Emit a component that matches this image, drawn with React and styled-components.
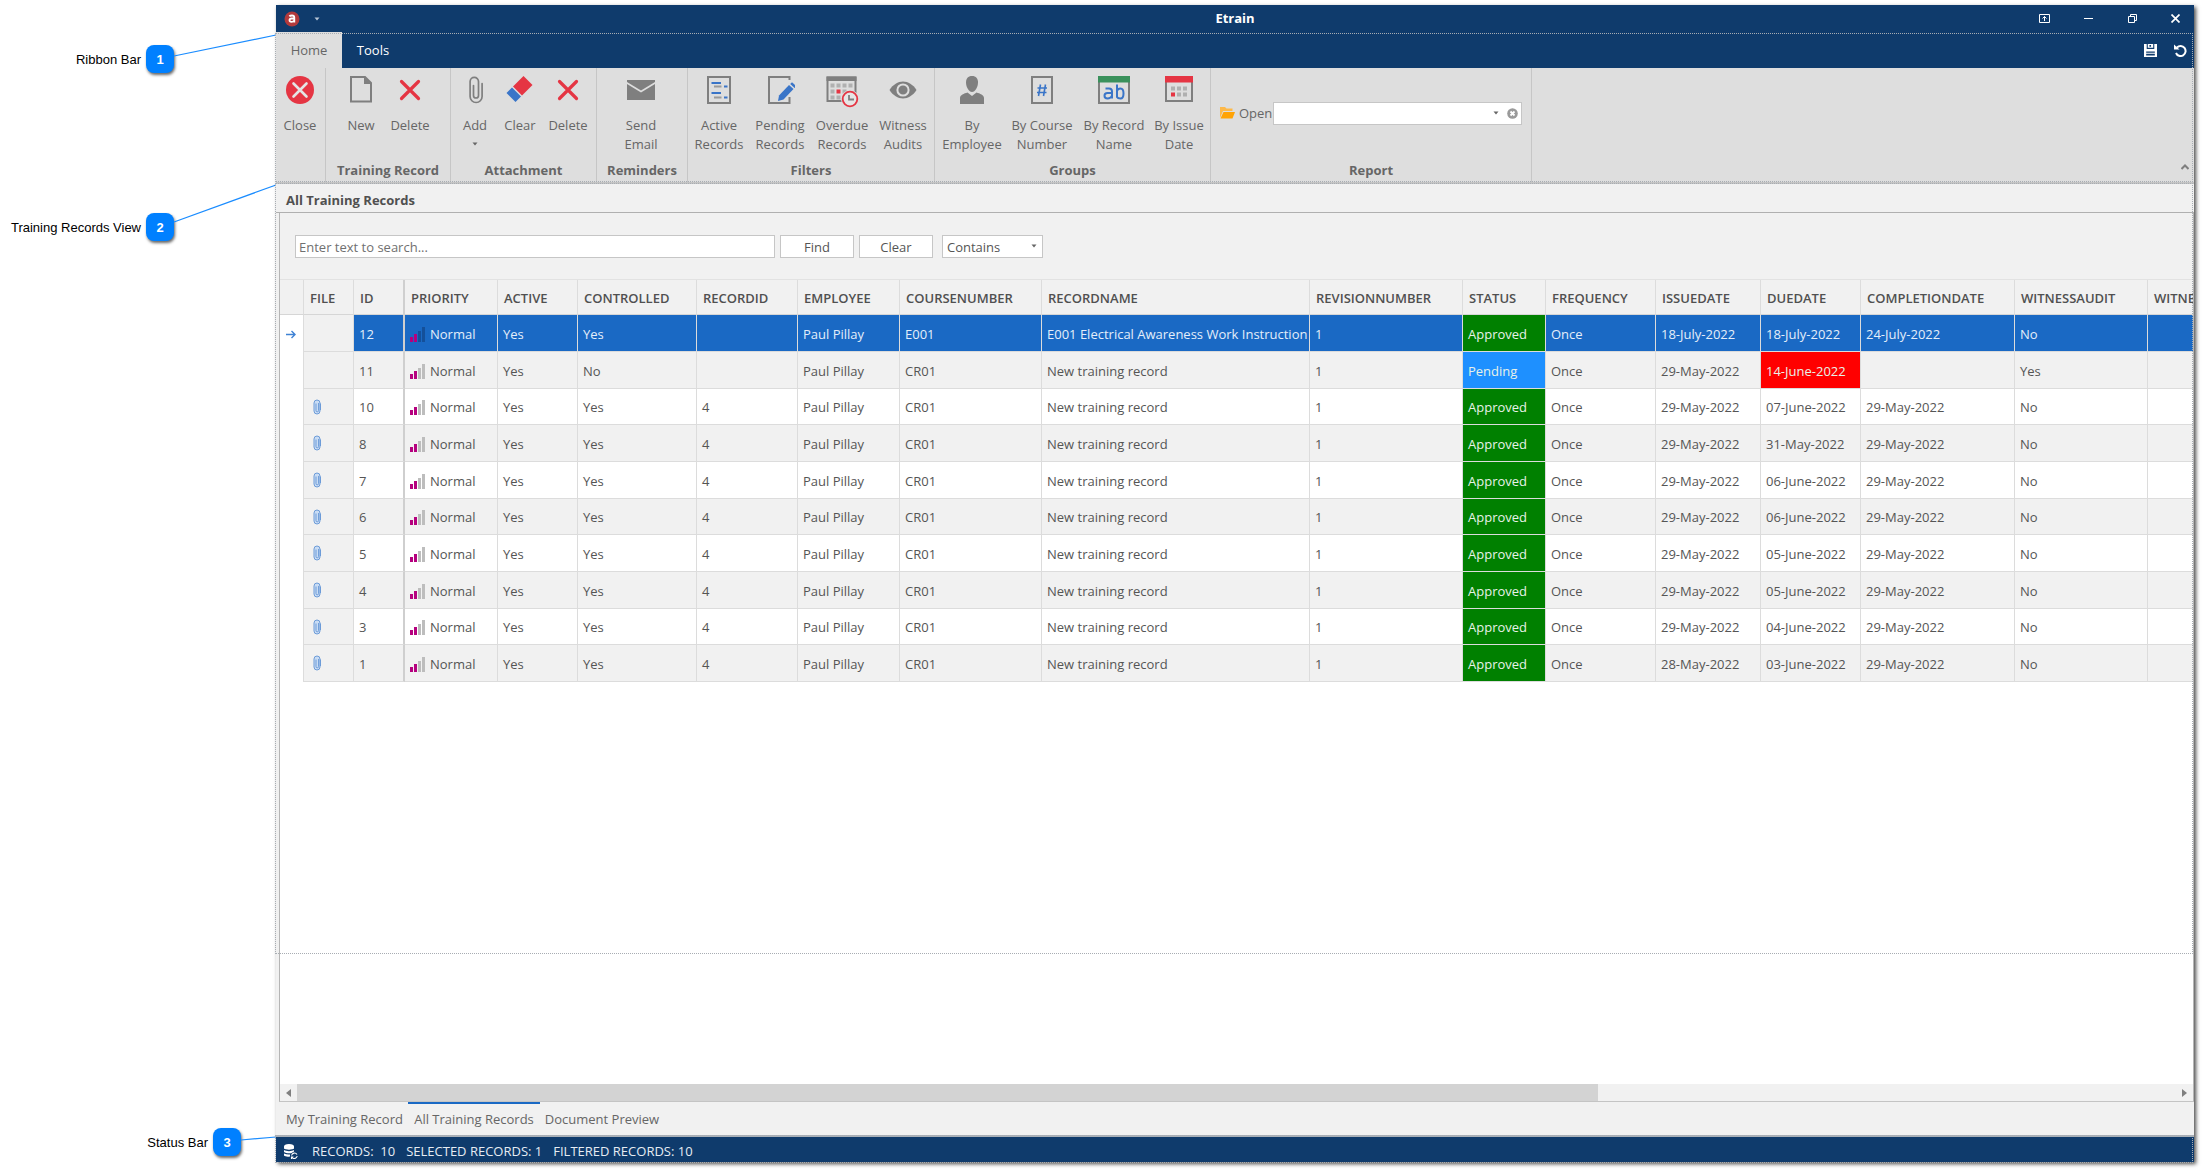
import React from "react";
import styled, { createGlobalStyle } from "styled-components";

const GlobalStyle = createGlobalStyle`
  * {
    box-sizing: border-box;
  }
  body {
    margin: 0;
    background: #fff;
    color: #555;
    font-family: "Open Sans", "Noto Sans", sans-serif;
    font-size: 13px;
    line-height: 19px;
  }
  button, input, select {
    font: inherit;
    color: inherit;
    margin: 0;
    padding: 0;
    border: 0;
    background: none;
    border-radius: 0;
  }
  svg {
    display: block;
    flex: none;
  }
`;

const Page = styled.div`
  position: relative;
  display: flex;
  min-height: 100vh;
`;
const Gutter = styled.aside`
  flex: none;
  width: 276px;
`;
const Callout = styled.div`
  position: absolute;
  left: 0;
  width: ${(p) => p.$width}px;
  ${(p) => (p.$bottom ? `bottom: ${p.$bottom}px;` : `top: ${p.$top}px;`)}
  display: flex;
  align-items: center;
  justify-content: flex-end;
  gap: 5px;
  color: #000;
  font-family: "Liberation Sans", Arial, sans-serif;
`;
const Badge = styled.span`
  display: flex;
  align-items: center;
  justify-content: center;
  width: 28px;
  height: 28px;
  border-radius: 8px;
  background: #0080ff;
  box-shadow: 1px 2px 3px rgba(0, 0, 0, 0.6);
  color: #fff;
  font-weight: bold;
`;
const Leader = styled.svg`
  position: absolute;
  left: 100%;
  top: 0;
  overflow: visible;
`;

const Window = styled.main`
  position: relative;
  display: flex;
  flex-direction: column;
  flex: 1;
  min-width: 0;
  margin: 5px 15px 12px 0;
  background: #f1f1f1;
  box-shadow: 2px 2px 4px rgba(0, 0, 0, 0.7);
`;
const Outline = styled.div`
  position: absolute;
  left: -1px;
  right: 1px;
  top: ${(p) => p.$top};
  bottom: ${(p) => p.$bottom};
  height: ${(p) => p.$height};
  border: 1px dotted #a8adb3;
  pointer-events: none;
`;

const TitleBar = styled.header`
  display: grid;
  grid-template-columns: 1fr auto 1fr;
  align-items: center;
  height: 27px;
  background: #0f3b6c;
  color: #fff;
`;
const AppTitle = styled.h1`
  margin: 0;
  font-size: 13px;
  font-weight: 700;
`;
const TitleLeft = styled.div`
  display: flex;
  align-items: center;
  gap: 14px;
  padding-left: 8px;
`;
const WindowButtons = styled.div`
  display: flex;
  justify-content: flex-end;
  padding-right: 6px;
`;
const WindowButton = styled.button`
  display: flex;
  align-items: center;
  justify-content: center;
  width: 44px;
  height: 26px;
  &:last-child {
    width: 26px;
    margin-left: 8px;
  }
`;
const TabRow = styled.nav`
  display: flex;
  height: 36px;
  background: #0f3b6c;
`;
const RibbonTab = styled.button`
  width: ${(p) => p.$width}px;
  padding-top: 1px;
  background: ${(p) => (p.$active ? "#dedede" : "none")};
  color: ${(p) => (p.$active ? "#666" : "#fff")};
`;
const QuickButtons = styled.div`
  display: flex;
  align-items: center;
  gap: 16px;
  margin-left: auto;
  padding-right: 6px;
`;
const QuickButton = styled.button`
  width: 14px;
`;

const Ribbon = styled.section`
  display: flex;
  height: 116px;
  background: #dedede;
  color: #666;
  border-bottom: 2px solid #c4c4c4;
`;
const Group = styled.div`
  display: flex;
  flex-direction: column;
  flex: none;
  width: ${(p) => p.$width}px;
  border-right: 1px solid #c6c6c6;
`;
const GroupItems = styled.div`
  display: flex;
  flex: 1;
  padding-left: ${(p) => p.$indent || 0}px;
`;
const GroupTitle = styled.h2`
  margin: 0;
  height: 21px;
  font-size: 13px;
  font-weight: 700;
  line-height: 19px;
  text-align: center;
`;
const ToolButton = styled.button`
  display: flex;
  flex-direction: column;
  align-items: center;
  flex: none;
  width: ${(p) => p.$width}px;
  padding-top: 7px;
`;
const ToolLabel = styled.span`
  display: block;
  margin-top: 11px;
  white-space: pre;
  text-align: center;
`;
const ReportRow = styled.div`
  display: flex;
  align-items: center;
  height: 90px;
  gap: 1px;
  margin-bottom: 3px;
  padding: 0 9px;
`;
const ReportLabel = styled.label`
  display: flex;
  align-items: center;
  gap: 4px;
`;
const ComboBox = styled.div`
  display: flex;
  align-items: center;
  gap: 8px;
  flex: 1;
  height: 23px;
  padding-right: 3px;
  border: 1px solid #c6c6c6;
  background: #fff;
`;
const ComboInput = styled.input`
  flex: 1;
  min-width: 0;
  outline: none;
`;
const CollapseButton = styled.button`
  align-self: flex-end;
  margin-left: auto;
  padding: 0 5px 12px;
`;

const ViewTitle = styled.h2`
  margin: 0;
  height: 29px;
  padding: 7px 10px 0;
  border-bottom: 1px solid #b0b0b0;
  color: #505050;
  font-size: 13px;
  font-weight: 700;
  line-height: 19px;
`;
const View = styled.section`
  display: flex;
  flex-direction: column;
  flex: 1;
  min-height: 0;
  margin-left: 3px;
  border-left: 1px solid #b5b5b5;
  border-right: 1px solid #b5b5b5;
  border-bottom: 1px solid #c4c4c4;
  background: #fff;
`;
const SearchRow = styled.form`
  display: flex;
  align-items: flex-start;
  height: 67px;
  padding: 22px 15px 0;
  background: #f1f1f1;
  border-bottom: 1px solid #e2e2e2;
`;
const SearchInput = styled.input`
  width: 480px;
  height: 23px;
  padding: 1px 3px 0;
  border: 1px solid #c6c6c6;
  background: #fff;
  &::placeholder {
    color: #707070;
    opacity: 1;
  }
`;
const SearchButton = styled.button`
  width: 74px;
  height: 23px;
  margin-left: 5px;
  padding-top: 1px;
  border: 1px solid #c6c6c6;
  background: #fff;
`;
const SelectBox = styled.div`
  position: relative;
  margin-left: 9px;
`;
const Select = styled.select`
  appearance: none;
  width: 101px;
  height: 23px;
  padding: 1px 4px 0;
  border: 1px solid #c6c6c6;
  background: #fff;
`;
const SelectArrow = styled.span`
  position: absolute;
  right: 6px;
  top: 9px;
  pointer-events: none;
`;

const GridScroll = styled.div`
  flex: 1;
  min-height: 0;
  overflow: hidden;
`;
const Table = styled.table`
  table-layout: fixed;
  width: 2018px;
  border-collapse: separate;
  border-spacing: 0;
`;
const HeadCell = styled.th`
  height: 35px;
  padding: 2px 6px 0;
  border-right: ${(p) => (p.$pinned ? "2px solid #cfcfcf" : "1px solid #dcdcdc")};
  border-bottom: 1px solid #d6d6d6;
  background: #f1f1f1;
  color: #505050;
  font-weight: 600;
  font-size: 13px;
  text-align: left;
  white-space: nowrap;
`;
const Row = styled.tr`
  height: 37px;
  background: ${(p) => (p.$selected ? "#1a69c4" : "#fff")};
  color: ${(p) => (p.$selected ? "#e4eefa" : "#555")};
  &:nth-child(even) {
    background: #f1f1f1;
  }
  &:nth-child(3n) {
    height: 36px;
  }
`;
const Cell = styled.td`
  padding: 2px 5px 0;
  border-right: ${(p) => (p.$pinned ? "2px solid #cfcfcf" : "1px solid #dcdcdc")};
  border-bottom: 1px solid #dcdcdc;
  background: ${(p) => p.$fill || "transparent"};
  color: ${(p) => (p.$fill ? "#e8f2e8" : "inherit")};
  white-space: nowrap;
`;
const IndicatorCell = styled.td`
  padding: 2px 0 0 6px;
  border-right: 1px solid #dcdcdc;
  background: #fff;
`;
const FileCell = styled(Cell)`
  padding: 0 9px;
  background: #f1f1f1;
`;
const Priority = styled.span`
  display: flex;
  align-items: center;
  gap: 5px;
`;

const ScrollBar = styled.div`
  display: flex;
  height: 17px;
  background: #f1f1f1;
`;
const ScrollButton = styled.button`
  display: flex;
  align-items: center;
  justify-content: center;
  width: 17px;
`;
const ScrollTrack = styled.div`
  display: grid;
  grid-template-columns: 9fr 4fr;
  flex: 1;
`;
const ScrollThumb = styled.div`
  background: #d3d3d3;
`;

const ViewTabs = styled.nav`
  display: flex;
  height: 33px;
  padding-left: 5px;
`;
const ViewTab = styled.button`
  width: ${(p) => p.$width}px;
  border-top: 2px solid ${(p) => (p.$active ? "#1a69c4" : "transparent")};
  color: #666;
  white-space: nowrap;
`;
const StatusBar = styled.footer`
  display: flex;
  align-items: center;
  gap: 11px;
  height: 27px;
  padding: 3px 8px 0;
  border-top: 2px solid #a9b0b8;
  background: #0f3b6c;
  color: #e6ecf3;
  white-space: pre;
`;
const StatusIcon = styled.span`
  margin-right: 3px;
`;

const GRAY = "#7f7f7f";
const RED = "#e53543";
const BLUE = "#3a75c8";

const Icon = ({ size = 30, children }) => (
  <svg width={size} height={size} viewBox="0 0 30 30" fill="none">
    {children}
  </svg>
);

const CloseIcon = () => (
  <Icon>
    <circle cx="15" cy="15" r="14" fill={RED} />
    <path d="M8.500 8.500 21.500 21.500M21.500 8.500 8.500 21.500" stroke="#e4e4e4" strokeWidth="2.600" strokeLinecap="round" />
  </Icon>
);
const NewIcon = () => (
  <Icon>
    <path d="M5 2H19L25 8V26.500H5Z" stroke={GRAY} strokeWidth="2" />
    <path d="M18 2V9H26Z" fill={GRAY} />
  </Icon>
);
const DeleteIcon = () => (
  <Icon>
    <path d="M6.500 6.500 23.500 23.500M23.500 6.500 6.500 23.500" stroke={RED} strokeWidth="3.200" strokeLinecap="round" />
  </Icon>
);
const ClipIcon = () => (
  <Icon>
    <path
      d="M18.500 8V20.500a2.500 2.500 0 0 1-5 0V10.500M18.500 8.500V6.500a4.200 4.200 0 0 0-8.400 0V21.500a6 6 0 0 0 12 0V8.500"
      stroke={GRAY}
      strokeWidth="1.700"
      strokeLinecap="round"
    />
  </Icon>
);
const EraserIcon = () => (
  <Icon>
    <path d="M18.500 1 27.500 10 17 20.500 8 11.500Z" fill={RED} />
    <path d="M7 12.500 16 21.500 10.500 27 1.500 18Z" fill={BLUE} />
  </Icon>
);
const MailIcon = () => (
  <Icon>
    <path d="M1 5H29V7L15 15.500 1 7Z" fill={GRAY} />
    <path d="M1 9 15 17.500 29 9V25H1Z" fill={GRAY} />
  </Icon>
);
const ActiveIcon = () => (
  <Icon>
    <rect x="4" y="2" width="22" height="26" stroke={GRAY} strokeWidth="2" />
    <path d="M7.500 8H17M20 11.500H23.500M7.500 18H17M20 22.500H23.500" stroke={BLUE} strokeWidth="1.800" />
    <path d="M10 11.500H17.500M10 22.500H17.500" stroke="#9a9a9a" strokeWidth="1.800" />
  </Icon>
);
const PendingIcon = () => (
  <Icon>
    <path d="M24.500 5V2H4V28H24.500V22" stroke={GRAY} strokeWidth="2" />
    <path d="M14 20.500 24 10 28.500 14 18.500 24.500 13 26Z" fill={BLUE} />
    <path d="M25.200 9 27 7.300 31.500 11.500 29.600 13Z" fill={BLUE} />
  </Icon>
);
const OverdueIcon = () => (
  <svg width="34" height="34" viewBox="0 0 34 34" fill="none">
    <path d="M2.500 2.500H30.500V26H2.500Z" stroke={GRAY} strokeWidth="2" />
    <path d="M1.500 1.500H31.500V6H1.500Z" fill={GRAY} />
    <path
      d="M5.500 8.500h4v4h-4ZM11.500 8.500h4v4h-4ZM17.500 8.500h4v4h-4ZM23.500 8.500h4v4h-4ZM5.500 14.500h4v4h-4ZM17.500 14.500h4v4h-4ZM5.500 20.500h4v4h-4ZM11.500 20.500h4v4h-4Z"
      fill="#b0b0b0"
    />
    <path d="M11.500 14.500h4v4h-4Z" fill={RED} />
    <circle cx="25" cy="24" r="9" fill="#dedede" />
    <circle cx="25" cy="24" r="7.300" stroke={RED} strokeWidth="1.800" fill="#e6e6e6" />
    <path d="M24 20V24.500H29" stroke={GRAY} strokeWidth="1.800" />
  </svg>
);
const EyeIcon = () => (
  <Icon>
    <path d="M1.500 15C5 9.500 10 6.500 15 6.500S25 9.500 28.500 15C25 20.500 20 23.500 15 23.500S5 20.500 1.500 15Z" fill={GRAY} />
    <circle cx="15" cy="15" r="5.600" stroke="#dedede" strokeWidth="2" />
  </Icon>
);
const PersonIcon = () => (
  <Icon>
    <path d="M15 1C19 1 21 3.500 21 7.500 21 12 18 17 15 17S9 12 9 7.500C9 3.500 11 1 15 1Z" fill={GRAY} />
    <path d="M3 29V23C3 20 7 18.500 10.500 17.500L15 21 19.500 17.500C23 18.500 27 20 27 23V29Z" fill={GRAY} />
  </Icon>
);
const NumberIcon = () => (
  <Icon>
    <rect x="5" y="2" width="20" height="26" stroke={GRAY} strokeWidth="2" />
    <path d="M13.500 9.500 11.500 21M18.500 9.500 16.500 21M10.500 13H20M10 17.500H19.500" stroke={BLUE} strokeWidth="1.600" />
  </Icon>
);
const NameIcon = () => (
  <svg width="34" height="30" viewBox="0 0 34 30" fill="none">
    <rect x="2" y="3" width="30" height="25" stroke={GRAY} strokeWidth="2" />
    <path d="M1 1H33V7.500H1Z" fill="#3a915c" />
    <path
      d="M8.500 13.500H12C14 13.500 15 14.500 15 16.500V23.500M15 18H10.500C8.500 18 7.500 19 7.500 20.700S8.500 23.500 10.500 23.500C12.500 23.500 15 22 15 20"
      stroke={BLUE}
      strokeWidth="2"
    />
    <path d="M20 9.500V22.500M20 16C20.500 14 22 13.500 23.500 13.500 25.500 13.500 26.500 15 26.500 18.500S25.500 23.500 23.500 23.500 20.500 23 20 22" stroke={BLUE} strokeWidth="2" />
  </svg>
);
const DateIcon = () => (
  <Icon>
    <rect x="2" y="3" width="26" height="23" stroke={GRAY} strokeWidth="2" />
    <path d="M1 1H29V7.500H1Z" fill={RED} />
    <path d="M7 11.500h4v4h-4ZM13 11.500h4v4h-4ZM19 11.500h4v4h-4ZM13 17.500h4v4h-4ZM19 17.500h4v4h-4Z" fill="#b0b0b0" />
    <path d="M7 17.500h4v4h-4Z" fill={RED} />
  </Icon>
);
const FolderIcon = () => (
  <svg width="15" height="12" viewBox="0 0 15 12">
    <path d="M0 0H5L6.500 1.500H12.500V4H3L0 11Z" fill="#fdb94a" />
    <path d="M3.500 5H15L12.500 11.500H0.500Z" fill="#ffa305" />
  </svg>
);
const DownArrow = ({ color = "#666" }) => (
  <svg width="6" height="4" viewBox="0 0 6 4">
    <path d="M0.500 0.500H5.500L3 3.500Z" fill={color} />
  </svg>
);
const RowClip = () => (
  <svg width="9" height="16" viewBox="0 0 9 16" fill="none" stroke="#6c9bd8">
    <rect x="1" y="1" width="6" height="14" rx="3" fill="#c9dcf4" />
    <path d="M3 4.500V11.500a1.300 1.300 0 0 0 2.600 0V4" />
    <path d="M7.500 4.500V11" />
  </svg>
);
const Bars = ({ selected }) => (
  <svg width="15" height="15" viewBox="0 0 15 15">
    <path d="M0 10h3v5H0ZM4 7h3v8H4Z" fill="#b5007e" />
    <path d="M8 4h3v11H8ZM12 0h3v15h-3Z" fill={selected ? "#14509a" : "#bdbdbd"} />
  </svg>
);

const columns = [
  ["", 24],
  ["FILE", 50],
  ["ID", 51],
  ["PRIORITY", 93],
  ["ACTIVE", 80],
  ["CONTROLLED", 119],
  ["RECORDID", 101],
  ["EMPLOYEE", 102],
  ["COURSENUMBER", 142],
  ["RECORDNAME", 268],
  ["REVISIONNUMBER", 153],
  ["STATUS", 83],
  ["FREQUENCY", 110],
  ["ISSUEDATE", 105],
  ["DUEDATE", 100],
  ["COMPLETIONDATE", 154],
  ["WITNESSAUDIT", 133],
  ["WITNE", 150],
];

const record = (id, issued, due) => ({
  id,
  file: true,
  controlled: "Yes",
  recordId: "4",
  course: "CR01",
  name: "New training record",
  status: "Approved",
  issued,
  due,
  completed: "29-May-2022",
  witness: "No",
});

const records = [
  {
    ...record(12, "18-July-2022", "18-July-2022"),
    file: false,
    selected: true,
    recordId: "",
    course: "E001",
    name: "E001 Electrical Awareness Work Instruction",
    completed: "24-July-2022",
  },
  {
    ...record(11, "29-May-2022", "14-June-2022"),
    file: false,
    controlled: "No",
    recordId: "",
    status: "Pending",
    overdue: true,
    completed: "",
    witness: "Yes",
  },
  record(10, "29-May-2022", "07-June-2022"),
  record(8, "29-May-2022", "31-May-2022"),
  record(7, "29-May-2022", "06-June-2022"),
  record(6, "29-May-2022", "06-June-2022"),
  record(5, "29-May-2022", "05-June-2022"),
  record(4, "29-May-2022", "05-June-2022"),
  record(3, "29-May-2022", "04-June-2022"),
  record(1, "28-May-2022", "03-June-2022"),
];

const statusFill = { Approved: "#008000", Pending: "#1e90ff" };

const groups = [
  { title: "", width: 50, items: [["Close", CloseIcon, 48]] },
  {
    title: "Training Record",
    width: 125,
    indent: 10,
    items: [
      ["New", NewIcon, 50],
      ["Delete", DeleteIcon, 48],
    ],
  },
  {
    title: "Attachment",
    width: 146,
    items: [
      ["Add", ClipIcon, 48, true],
      ["Clear", EraserIcon, 42],
      ["Delete", DeleteIcon, 54],
    ],
  },
  { title: "Reminders", width: 91, items: [["Send\nEmail", MailIcon, 88]] },
  {
    title: "Filters",
    width: 247,
    items: [
      ["Active\nRecords", ActiveIcon, 62],
      ["Pending\nRecords", PendingIcon, 60],
      ["Overdue\nRecords", OverdueIcon, 64],
      ["Witness\nAudits", EyeIcon, 58],
    ],
  },
  {
    title: "Groups",
    width: 276,
    items: [
      ["By\nEmployee", PersonIcon, 74],
      ["By Course\nNumber", NumberIcon, 66],
      ["By Record\nName", NameIcon, 78],
      ["By Issue\nDate", DateIcon, 52],
    ],
  },
];

const IconSlot = styled.span`
  display: flex;
  justify-content: center;
  height: 30px;
`;
const DropMark = styled.span`
  margin-top: 7px;
`;

const RibbonBar = () => (
  <Ribbon>
    {groups.map((group) => (
      <Group key={group.title} $width={group.width}>
        <GroupItems $indent={group.indent}>
          {group.items.map(([label, Glyph, width, drop]) => (
            <ToolButton key={label} type="button" $width={width}>
              <IconSlot>
                <Glyph />
              </IconSlot>
              <ToolLabel>{label}</ToolLabel>
              {drop && (
                <DropMark>
                  <DownArrow />
                </DropMark>
              )}
            </ToolButton>
          ))}
        </GroupItems>
        <GroupTitle>{group.title}</GroupTitle>
      </Group>
    ))}
    <Group $width={321}>
      <ReportRow>
        <ReportLabel htmlFor="report">
          <FolderIcon />
          Open
        </ReportLabel>
        <ComboBox>
          <ComboInput id="report" type="text" />
          <button type="button" aria-label="Show reports">
            <DownArrow />
          </button>
          <button type="button" aria-label="Clear report">
            <svg width="11" height="11" viewBox="0 0 11 11">
              <circle cx="5.500" cy="5.500" r="5.300" fill="#9a9a9a" />
              <path d="M3.500 3.500 7.500 7.500M7.500 3.500 3.500 7.500" stroke="#fff" strokeWidth="1.800" />
            </svg>
          </button>
        </ComboBox>
      </ReportRow>
      <GroupTitle>Report</GroupTitle>
    </Group>
    <CollapseButton type="button" aria-label="Collapse ribbon">
      <svg width="8" height="6" viewBox="0 0 8 6" fill="none" stroke={GRAY} strokeWidth="2">
        <path d="M0.500 5 4 1.500 7.500 5" />
      </svg>
    </CollapseButton>
  </Ribbon>
);

const RecordRow = ({ item }) => (
  <Row $selected={item.selected}>
    <IndicatorCell>
      {item.selected && (
        <svg width="10" height="9" viewBox="0 0 10 9" fill="none" stroke="#3f82d4" strokeWidth="1.400">
          <path d="M0 4.500H9M5.500 1 9 4.500 5.500 8" />
        </svg>
      )}
    </IndicatorCell>
    <FileCell>{item.file && <RowClip />}</FileCell>
    <Cell $pinned>{item.id}</Cell>
    <Cell>
      <Priority>
        <Bars selected={item.selected} />
        Normal
      </Priority>
    </Cell>
    <Cell>Yes</Cell>
    <Cell>{item.controlled}</Cell>
    <Cell>{item.recordId}</Cell>
    <Cell>Paul Pillay</Cell>
    <Cell>{item.course}</Cell>
    <Cell>{item.name}</Cell>
    <Cell>1</Cell>
    <Cell $fill={statusFill[item.status]}>{item.status}</Cell>
    <Cell>Once</Cell>
    <Cell>{item.issued}</Cell>
    <Cell $fill={item.overdue && "#ff0000"}>{item.due}</Cell>
    <Cell>{item.completed}</Cell>
    <Cell>{item.witness}</Cell>
    <Cell />
  </Row>
);

const RecordsTable = () => (
  <GridScroll>
    <Table>
      <colgroup>
        {columns.map(([name, width]) => (
          <col key={name} style={{ width }} />
        ))}
      </colgroup>
      <thead>
        <tr>
          {columns.map(([name]) => (
            <HeadCell key={name} $pinned={name === "ID"}>
              {name}
            </HeadCell>
          ))}
        </tr>
      </thead>
      <tbody>
        {records.map((item) => (
          <RecordRow key={item.id} item={item} />
        ))}
      </tbody>
    </Table>
  </GridScroll>
);

const Note = ({ label, number, line, ...place }) => (
  <Callout {...place}>
    {label}
    <Badge>{number}</Badge>
    <Leader width={line[0]} height="28">
      <line x1="0" y1={line[1]} x2={line[0]} y2={line[2]} stroke="#1a8cff" strokeWidth="1.200" />
    </Leader>
  </Callout>
);

export default function App() {
  return (
    <Page>
      <GlobalStyle />
      <Gutter>
        <Note label="Ribbon Bar" number="1" $width={174} $top={45} line={[102, 11, -10]} />
        <Note label="Training Records View" number="2" $width={174} $top={213} line={[102, 9, -28]} />
        <Note label="Status Bar" number="3" $width={241} $bottom={18} line={[35, 12, 9]} />
      </Gutter>
      <Window>
        <TitleBar>
          <TitleLeft>
            <svg width="16" height="16" viewBox="0 0 16 16" fill="none">
              <circle cx="8" cy="8" r="7.500" fill="#b23a3c" />
              <path
                d="M5.300 5.300C6 4.700 7 4.500 8 4.500 9.800 4.500 10.300 5.300 10.300 6.500V11.500M10.300 7.500H7.500C6.200 7.500 5.500 8.200 5.500 9.300S6.300 10.800 7.500 10.800 10.300 10 10.300 9"
                stroke="#fff"
                strokeWidth="1.800"
              />
            </svg>
            <DownArrow color="#b8c6d6" />
          </TitleLeft>
          <AppTitle>Etrain</AppTitle>
          <WindowButtons>
            <WindowButton type="button" aria-label="Ribbon display options">
              <svg width="11" height="9" viewBox="0 0 11 9" fill="none" stroke="#fff">
                <path d="M0.500 0.500H10.500V8.500H0.500ZM5.500 7V2.500M3.500 4.500 5.500 2.500 7.500 4.500" />
              </svg>
            </WindowButton>
            <WindowButton type="button" aria-label="Minimize">
              <svg width="9" height="9" viewBox="0 0 9 9" stroke="#fff">
                <path d="M0 4.500H9" />
              </svg>
            </WindowButton>
            <WindowButton type="button" aria-label="Restore">
              <svg width="9" height="9" viewBox="0 0 9 9" fill="none" stroke="#fff">
                <path d="M0.500 2.500H6.500V8.500H0.500ZM2.500 2.500V0.500H8.500V6.500H6.500" />
              </svg>
            </WindowButton>
            <WindowButton type="button" aria-label="Close window">
              <svg width="9" height="9" viewBox="0 0 9 9" stroke="#fff" strokeWidth="1.700">
                <path d="M0.500 0.500 8.500 8.500M8.500 0.500 0.500 8.500" />
              </svg>
            </WindowButton>
          </WindowButtons>
        </TitleBar>
        <TabRow>
          <RibbonTab type="button" $active $width={66}>
            Home
          </RibbonTab>
          <RibbonTab type="button" $width={62}>
            Tools
          </RibbonTab>
          <QuickButtons>
            <QuickButton type="button" aria-label="Save">
              <svg width="13" height="13" viewBox="0 0 12 12">
                <path d="M0 0H2.500V4.500H9.500V0H12V12H0ZM2 7V8H10V7ZM2 9V10.500H10V9ZM3.500 0H8.500V3.500H3.500ZM5 1V2.500H6.500V1Z" fill="#fff" fillRule="evenodd" />
              </svg>
            </QuickButton>
            <QuickButton type="button" aria-label="Reset">
              <svg width="13" height="13" viewBox="0 0 13 13" fill="none" stroke="#fff" strokeWidth="2">
                <path d="M3 3.500A5 5 0 1 1 2 9" />
                <path d="M0 0.500V5.500H5.500Z" fill="#fff" stroke="none" />
              </svg>
            </QuickButton>
          </QuickButtons>
        </TabRow>
        <RibbonBar />
        <ViewTitle>All Training Records</ViewTitle>
        <View>
          <SearchRow onSubmit={(e) => e.preventDefault()}>
            <SearchInput type="text" aria-label="Search" placeholder="Enter text to search..." />
            <SearchButton type="submit">Find</SearchButton>
            <SearchButton type="reset">Clear</SearchButton>
            <SelectBox>
              <Select aria-label="Match" defaultValue="Contains">
                <option>Contains</option>
              </Select>
              <SelectArrow>
                <DownArrow />
              </SelectArrow>
            </SelectBox>
          </SearchRow>
          <RecordsTable />
          <ScrollBar>
            <ScrollButton type="button" aria-label="Scroll left">
              <svg width="5" height="8" viewBox="0 0 5 8">
                <path d="M5 0V8L0 4Z" fill={GRAY} />
              </svg>
            </ScrollButton>
            <ScrollTrack>
              <ScrollThumb />
            </ScrollTrack>
            <ScrollButton type="button" aria-label="Scroll right">
              <svg width="5" height="8" viewBox="0 0 5 8">
                <path d="M0 0V8L5 4Z" fill={GRAY} />
              </svg>
            </ScrollButton>
          </ScrollBar>
        </View>
        <ViewTabs>
          <ViewTab type="button" $width={127}>
            My Training Record
          </ViewTab>
          <ViewTab type="button" $active $width={132}>
            All Training Records
          </ViewTab>
          <ViewTab type="button" $width={124}>
            Document Preview
          </ViewTab>
        </ViewTabs>
        <StatusBar>
          <StatusIcon>
            <svg width="14" height="15" viewBox="0 0 14 15" fill="none">
              <ellipse cx="5" cy="2.500" rx="5" ry="2.500" fill="#fff" />
              <path d="M0 2.500H10V4.500C9 6 1 6 0 4.500ZM0 6C2 7.500 8 7.500 10 6V7.500L7 9.300C4 9.500 1 9 0 8ZM0 9.500C2 10.500 4 10.700 6 10.500V12.500C3 13 1 12.500 0 11.500Z" fill="#fff" />
              <path d="M7.500 11.500A3 3 0 0 1 13 10.500M13.200 12A3 3 0 0 1 8 13.500M7.500 15V13H9.500" stroke="#fff" strokeWidth="1.100" />
            </svg>
          </StatusIcon>
          <span>RECORDS:  10</span>
          <span>SELECTED RECORDS: 1</span>
          <span>FILTERED RECORDS: 10</span>
        </StatusBar>
        <Outline $top="28px" $height="149px" />
        <Outline $top="178px" $height="771px" />
        <Outline $bottom="-1px" $height="28px" />
      </Window>
    </Page>
  );
}
